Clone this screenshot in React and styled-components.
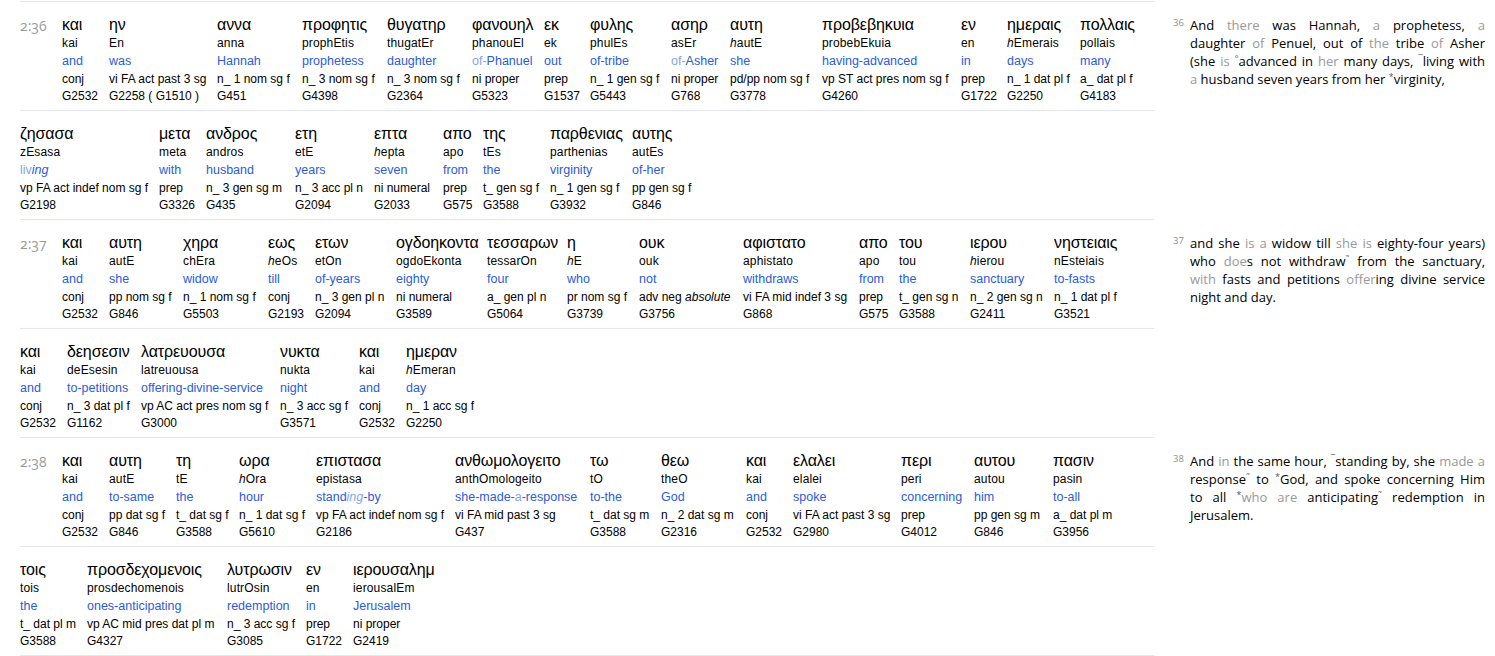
import React from "react";
import styled, { createGlobalStyle } from "styled-components";

const GlobalStyle = createGlobalStyle`
    body {
        margin: 0;
        background: #fff;
        color: #000;
        font-family: "Liberation Sans", Arial, sans-serif;
    }
`;

const Page = styled.div`
    width: 1495px;
    padding-top: 1px;
`;

const Verse = styled.section`
    display: flex;
`;

const Interlinear = styled.div`
    width: 1134px;
    margin-left: 20px;
    flex: none;
`;

const Row = styled.div`
    display: flex;
    height: 109px;
    box-sizing: border-box;
    padding-top: 14px;
    border-top: 1px solid #e3e6f1;
`;

const LastRule = styled.div`
    width: 1134px;
    margin-left: 20px;
    height: 1px;
    background: #e3e6f1;
`;

const VerseRef = styled.div`
    width: 42px;
    flex: none;
    margin-top: 1px;
    font-family: "Open Sans", sans-serif;
    font-size: 14px;
    line-height: 18px;
    color: #9a9a9a;
    font-variant-numeric: oldstyle-nums;
`;

const Word = styled.div`
    flex: none;
    width: ${(props) => props.$w}px;
    white-space: nowrap;
    font-size: 12px;
    line-height: 18px;
`;

const Greek = styled.div`
    font-size: 16px;
    letter-spacing: -0.1px;
    height: 18px;
`;

const Translit = styled.div`
    height: 18px;
    letter-spacing: 0.15px;
`;

const Gloss = styled.div`
    height: 18px;
    font-size: 12.5px;
    color: #2a5cdc;
`;

const Faint = styled.span`
    color: #86a4ea;
`;

const Morph = styled.div`
    height: 17px;
`;

const Strong = styled.div`
    height: 18px;
`;

const Commentary = styled.div`
    display: flex;
    margin-left: 19px;
    padding-top: 15px;
    width: 312px;
    font-family: "Open Sans", sans-serif;
    font-size: 13px;
    line-height: 18px;
`;

const VerseNum = styled.div`
    width: 17px;
    flex: none;
    font-size: 9.5px;
    line-height: 14px;
    color: #8c8c8c;
`;

const Text = styled.div`
    width: 295px;
`;

const Line = styled.div`
    height: 18px;
    white-space: nowrap;
    text-align: justify;
    text-align-last: ${(props) => (props.$last ? "left" : "justify")};
`;

const Added = styled.span`
    color: #999;
`;

const Mark = styled.span`
    font-size: 9px;
    line-height: 0;
    vertical-align: 4px;
    color: #555;
`;

const r = (positions, end) => positions.map((x, i) => (positions[i + 1] ?? end) - x);

const rows = {
    a: {
        ref: "2:36",
        ws: r([62, 109, 217, 302, 387, 472, 544, 590, 671, 730, 822, 961, 1007, 1080], 1154),
        words: [
            ["και", "kai", "and", "conj", "G2532"],
            ["ην", "En", "was", "vi FA act past 3 sg", "G2258 ( G1510 )"],
            ["αννα", "anna", "Hannah", "n_ 1 nom sg f", "G451"],
            ["προφητις", "prophEtis", "prophetess", "n_ 3 nom sg f", "G4398"],
            ["θυγατηρ", "thugatEr", "daughter", "n_ 3 nom sg f", "G2364"],
            ["φανουηλ", "phanouEl", <><Faint>of-</Faint>Phanuel</>, "ni proper", "G5323"],
            ["εκ", "ek", "out", "prep", "G1537"],
            ["φυλης", "phulEs", "of-tribe", "n_ 1 gen sg f", "G5443"],
            ["ασηρ", "asEr", <><Faint>of-</Faint>Asher</>, "ni proper", "G768"],
            ["αυτη", <><i>h</i>autE</>, "she", "pd/pp nom sg f", "G3778"],
            ["προβεβηκυια", "probebEkuia", "having-advanced", "vp ST act pres nom sg f", "G4260"],
            ["εν", "en", "in", "prep", "G1722"],
            ["ημεραις", <><i>h</i>Emerais</>, "days", "n_ 1 dat pl f", "G2250"],
            ["πολλαις", "pollais", "many", "a_ dat pl f", "G4183"],
        ],
    },
    b: {
        ws: r([20, 159, 206, 295, 374, 443, 483, 550, 632], 1154),
        words: [
            ["ζησασα", "zEsasa", <><Faint>liv</Faint><i>ing</i></>, "vp FA act indef nom sg f", "G2198"],
            ["μετα", "meta", "with", "prep", "G3326"],
            ["ανδρος", "andros", "husband", "n_ 3 gen sg m", "G435"],
            ["ετη", "etE", "years", "n_ 3 acc pl n", "G2094"],
            ["επτα", <><i>h</i>epta</>, "seven", "ni numeral", "G2033"],
            ["απο", "apo", "from", "prep", "G575"],
            ["της", "tEs", "the", "t_ gen sg f", "G3588"],
            ["παρθενιας", "parthenias", "virginity", "n_ 1 gen sg f", "G3932"],
            ["αυτης", "autEs", "of-her", "pp gen sg f", "G846"],
        ],
    },
    c: {
        ref: "2:37",
        ws: r([62, 109, 183, 268, 315, 396, 487, 567, 639, 743, 859, 899, 970, 1054], 1154),
        words: [
            ["και", "kai", "and", "conj", "G2532"],
            ["αυτη", "autE", "she", "pp nom sg f", "G846"],
            ["χηρα", "chEra", "widow", "n_ 1 nom sg f", "G5503"],
            ["εως", <><i>h</i>eOs</>, "till", "conj", "G2193"],
            ["ετων", "etOn", "of-years", "n_ 3 gen pl n", "G2094"],
            ["ογδοηκοντα", "ogdoEkonta", "eighty", "ni numeral", "G3589"],
            ["τεσσαρων", "tessarOn", "four", "a_ gen pl n", "G5064"],
            ["η", <><i>h</i>E</>, "who", "pr nom sg f", "G3739"],
            ["ουκ", "ouk", "not", <>adv neg <i>absolute</i></>, "G3756"],
            ["αφιστατο", "aphistato", "withdraws", "vi FA mid indef 3 sg", "G868"],
            ["απο", "apo", "from", "prep", "G575"],
            ["του", "tou", "the", "t_ gen sg n", "G3588"],
            ["ιερου", <><i>h</i>ierou</>, "sanctuary", "n_ 2 gen sg n", "G2411"],
            ["νηστειαις", "nEsteiais", "to-fasts", "n_ 1 dat pl f", "G3521"],
        ],
    },
    d: {
        ws: r([20, 67, 141, 280, 359, 406], 1154),
        words: [
            ["και", "kai", "and", "conj", "G2532"],
            ["δεησεσιν", "deEsesin", "to-petitions", "n_ 3 dat pl f", "G1162"],
            ["λατρευουσα", "latreuousa", "offering-divine-service", "vp AC act pres nom sg f", "G3000"],
            ["νυκτα", "nukta", "night", "n_ 3 acc sg f", "G3571"],
            ["και", "kai", "and", "conj", "G2532"],
            ["ημεραν", <><i>h</i>Emeran</>, "day", "n_ 1 acc sg f", "G2250"],
        ],
    },
    e: {
        ref: "2:38",
        ws: r([62, 109, 176, 239, 316, 455, 590, 661, 746, 793, 901, 974, 1053], 1154),
        words: [
            ["και", "kai", "and", "conj", "G2532"],
            ["αυτη", "autE", "to-same", "pp dat sg f", "G846"],
            ["τη", "tE", "the", "t_ dat sg f", "G3588"],
            ["ωρα", <><i>h</i>Ora</>, "hour", "n_ 1 dat sg f", "G5610"],
            ["επιστασα", "epistasa", <>stand<Faint><i>ing</i></Faint>-by</>, "vp FA act indef nom sg f", "G2186"],
            ["ανθωμολογειτο", "anthOmologeito", <>she-made-<Faint>a</Faint>-response</>, "vi FA mid past 3 sg", "G437"],
            ["τω", "tO", "to-the", "t_ dat sg m", "G3588"],
            ["θεω", "theO", "God", "n_ 2 dat sg m", "G2316"],
            ["και", "kai", "and", "conj", "G2532"],
            ["ελαλει", "elalei", "spoke", "vi FA act past 3 sg", "G2980"],
            ["περι", "peri", "concerning", "prep", "G4012"],
            ["αυτου", "autou", "him", "pp gen sg m", "G846"],
            ["πασιν", "pasin", "to-all", "a_ dat pl m", "G3956"],
        ],
    },
    f: {
        ws: r([20, 87, 227, 306, 353], 1154),
        words: [
            ["τοις", "tois", "the", "t_ dat pl m", "G3588"],
            ["προσδεχομενοις", "prosdechomenois", "ones-anticipating", "vp AC mid pres dat pl m", "G4327"],
            ["λυτρωσιν", "lutrOsin", "redemption", "n_ 3 acc sg f", "G3085"],
            ["εν", "en", "in", "prep", "G1722"],
            ["ιερουσαλημ", "ierousalEm", "Jerusalem", "ni proper", "G2419"],
        ],
    },
};

function WordRow({ row }) {
    return (
        <Row>
            {row.ref && <VerseRef>{row.ref}</VerseRef>}
            {row.words.map((word, i) => (
                <Word key={i} $w={row.ws[i]}>
                    <Greek>{word[0]}</Greek>
                    <Translit>{word[1]}</Translit>
                    <Gloss>{word[2]}</Gloss>
                    <Morph>{word[3]}</Morph>
                    <Strong>{word[4]}</Strong>
                </Word>
            ))}
        </Row>
    );
}

export default function App() {
    return (
        <Page>
            <GlobalStyle />
            <Verse>
                <Interlinear>
                    <WordRow row={rows.a} />
                    <WordRow row={rows.b} />
                </Interlinear>
                <Commentary>
                    <VerseNum>36</VerseNum>
                    <Text>
                        <Line>And <Added>there</Added> was Hannah, <Added>a</Added> prophetess, <Added>a</Added></Line>
                        <Line>daughter <Added>of</Added> Penuel, out of <Added>the</Added> tribe <Added>of</Added> Asher</Line>
                        <Line>(she <Added>is</Added> <Mark>°</Mark>advanced in <Added>her</Added> many days, <Mark>¯</Mark>living with</Line>
                        <Line $last><Added>a</Added> husband seven years from her <Mark>*</Mark>virginity,</Line>
                    </Text>
                </Commentary>
            </Verse>
            <Verse>
                <Interlinear>
                    <WordRow row={rows.c} />
                    <WordRow row={rows.d} />
                </Interlinear>
                <Commentary>
                    <VerseNum>37</VerseNum>
                    <Text>
                        <Line>and she <Added>is a</Added> widow till <Added>she is</Added> eighty-four years)</Line>
                        <Line>who <Added>doe</Added>s not withdraw<Mark>˜</Mark> from the sanctuary,</Line>
                        <Line><Added>with</Added> fasts and petitions <Added>offer</Added>ing divine service</Line>
                        <Line $last>night and day.</Line>
                    </Text>
                </Commentary>
            </Verse>
            <Verse>
                <Interlinear>
                    <WordRow row={rows.e} />
                    <WordRow row={rows.f} />
                </Interlinear>
                <Commentary>
                    <VerseNum>38</VerseNum>
                    <Text>
                        <Line>And <Added>in</Added> the same hour, <Mark>¯</Mark>standing by, she <Added>made a</Added></Line>
                        <Line>response<Mark>˜</Mark> to <Mark>*</Mark>God, and spoke concerning Him</Line>
                        <Line>to all <Mark>*</Mark><Added>who are</Added> anticipating<Mark>˜</Mark> redemption in</Line>
                        <Line $last>Jerusalem.</Line>
                    </Text>
                </Commentary>
            </Verse>
            <LastRule />
        </Page>
    );
}
